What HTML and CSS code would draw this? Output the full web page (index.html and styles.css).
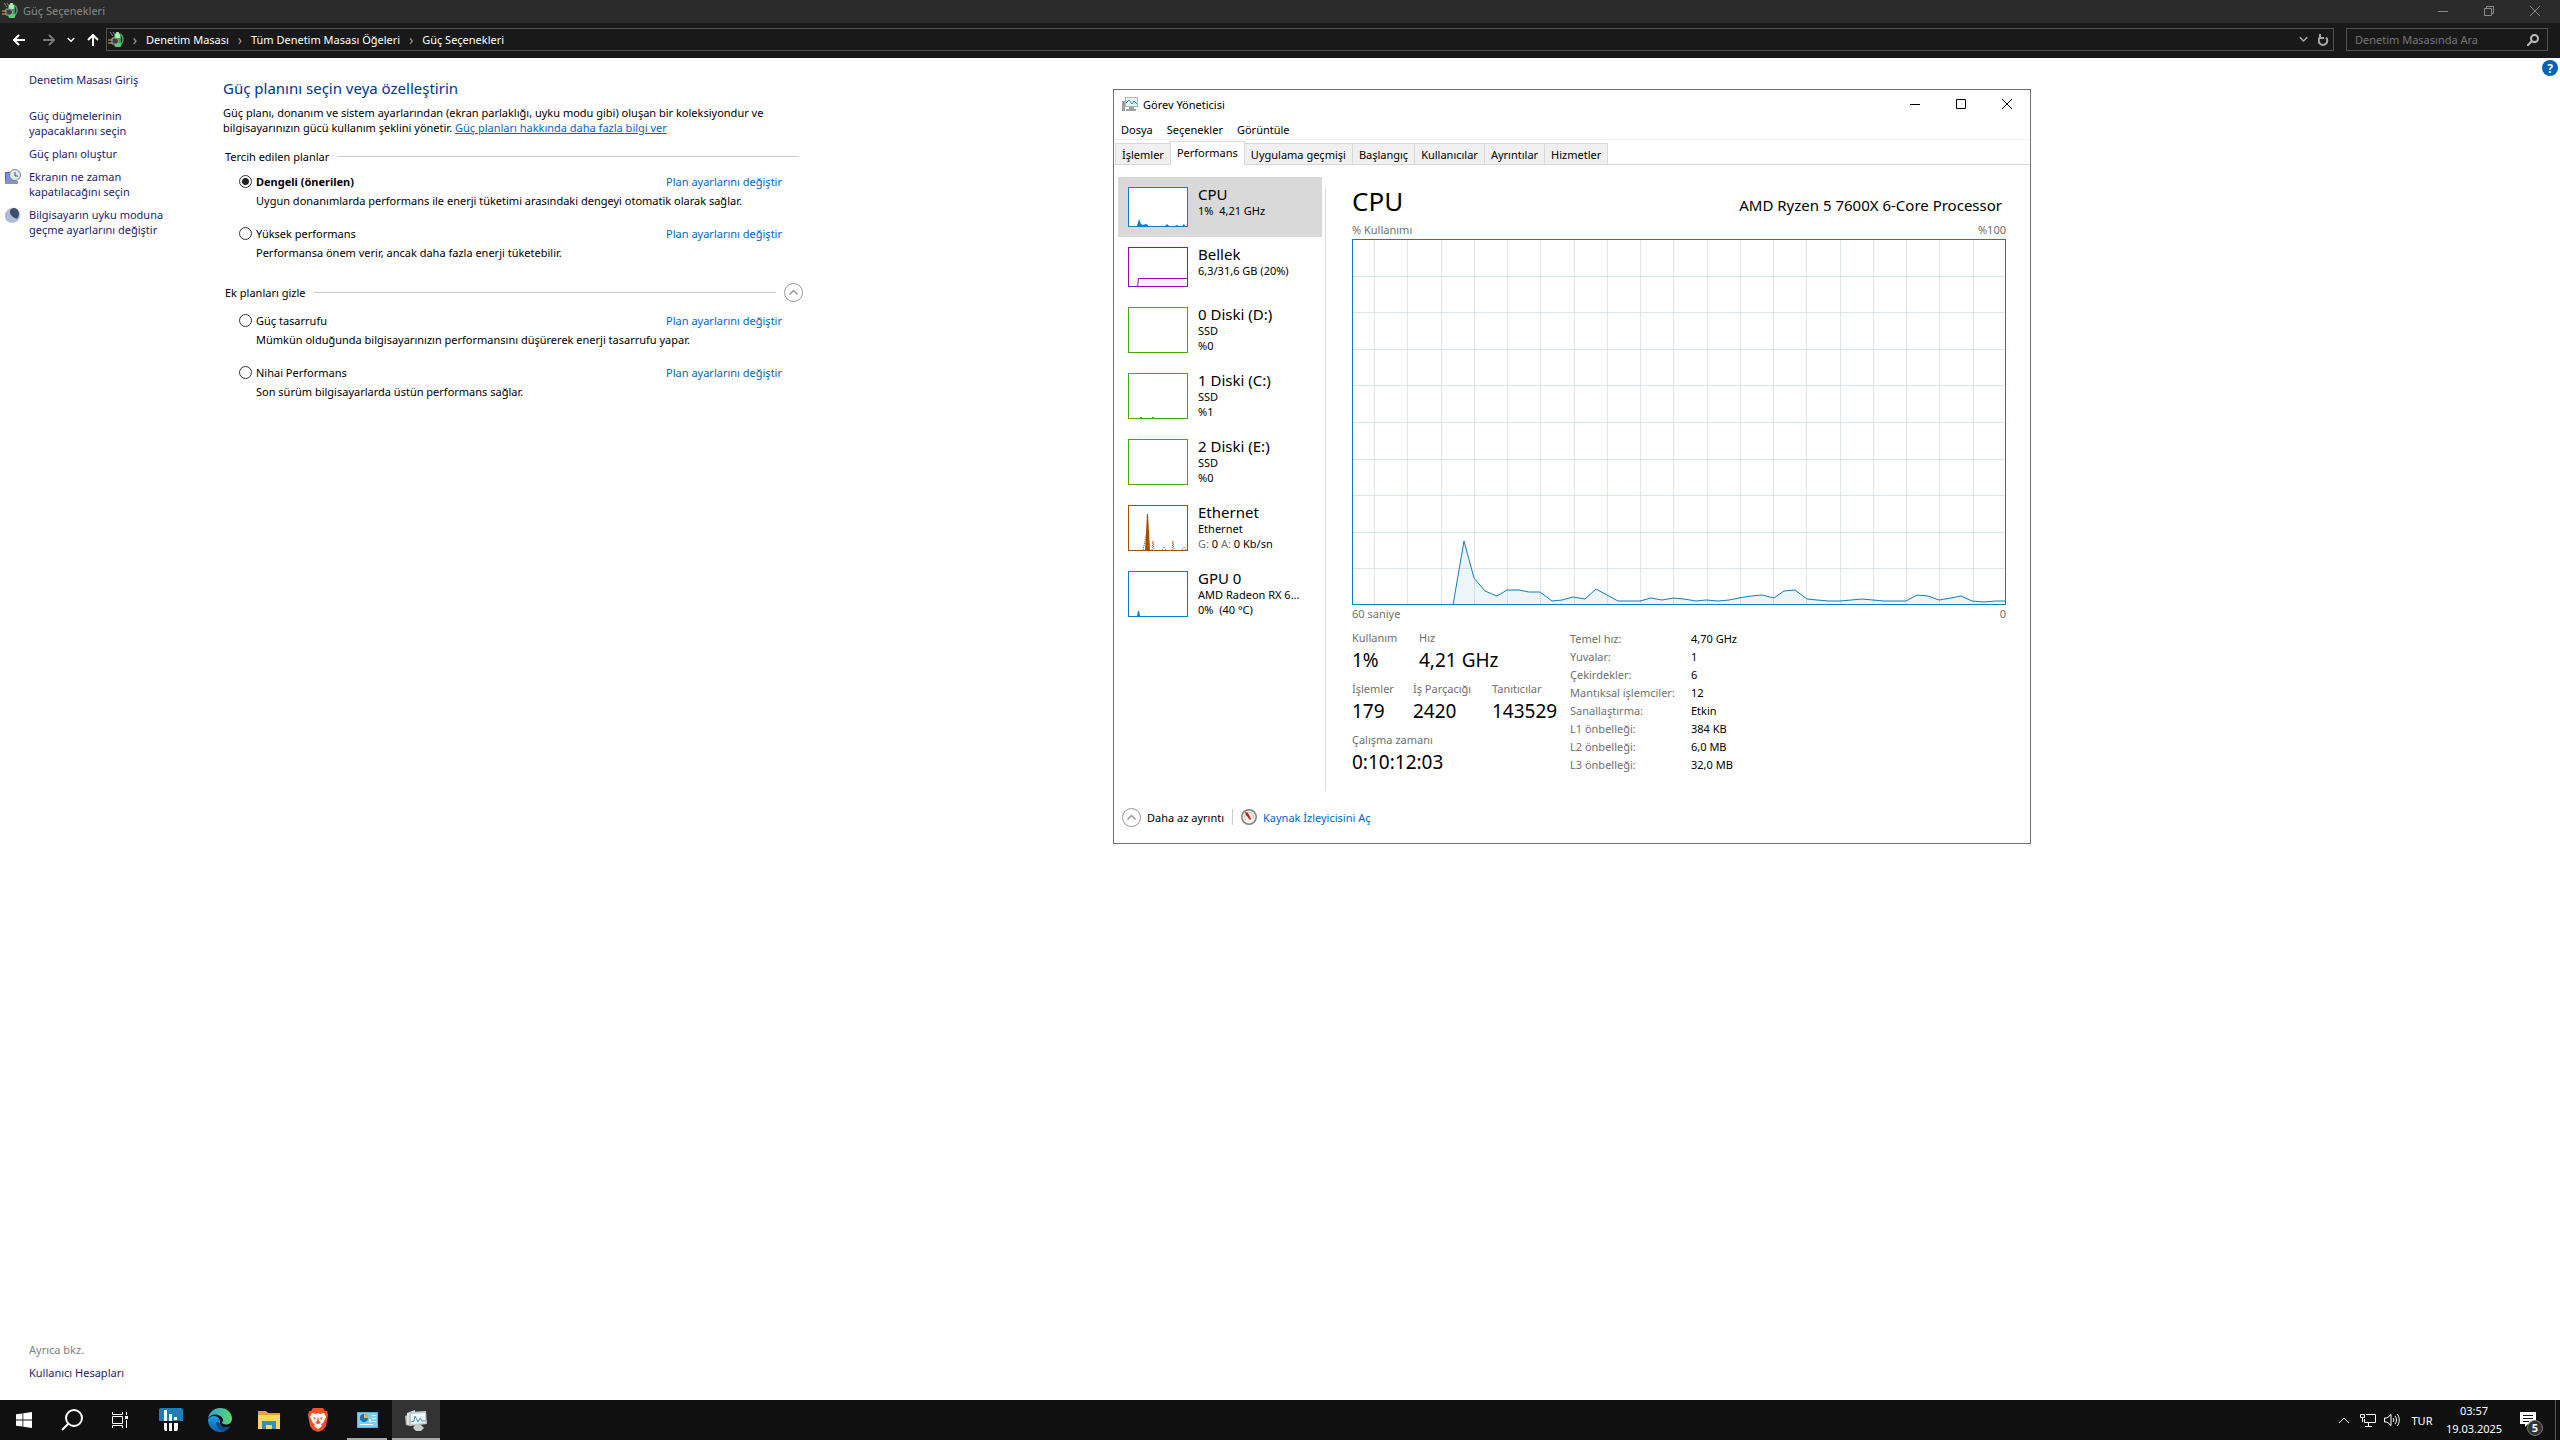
FILE: index.html
```html
<!DOCTYPE html>
<html lang="tr">
<head>
    <meta charset="UTF-8">
    <meta name="viewport" content="width=device-width, initial-scale=1.0">
    <title>Güç Seçenekleri</title>
    <link rel="stylesheet" href="styles.css">
</head>
<body>
    <!-- shared icons -->
    <svg class="defs" width="0" height="0" aria-hidden="true">
        <symbol id="power" viewBox="0 0 16 16">
            <path d="M2 0l3 4M5 0l2 3" stroke="#8a8a8a" stroke-width="1"/>
            <path d="M12 2c4 2 4 8 0 11" fill="none" stroke="#6f7d72" stroke-width="1.500"/>
            <rect x="6" y="1" width="7" height="14" rx="2" fill="#2f9e44"/>
            <rect x="8" y="0" width="3" height="2" rx="1" fill="#d5e8d8"/>
            <rect x="7" y="2" width="5" height="4" fill="#a5edb1"/>
            <rect x="7" y="11" width="6" height="4" rx="1" fill="#56cf6c"/>
            <path d="M4 6h5l2 3-2 3H4z" fill="#3a3f3c" stroke="#a9a9a9" stroke-width="1"/>
            <path d="M0 8h4M0 11h4" stroke="#e0b23c" stroke-width="1"/>
        </symbol>
        <symbol id="close" viewBox="0 0 10 10">
            <path d="M0 0l10 10M10 0L0 10" fill="none" stroke="currentColor"/>
        </symbol>
        <symbol id="minimize" viewBox="0 0 10 10">
            <path d="M0 5.500h10" stroke="currentColor"/>
        </symbol>
        <symbol id="chevron-up" viewBox="0 0 19 19">
            <circle cx="9.5" cy="9.5" r="9" fill="#fff" stroke="#999"/>
            <path d="M5.500 11.500l4-4 4 4" fill="none" stroke="#999" stroke-width="1.500"/>
        </symbol>
    </svg>

    <header>
        <div class="titlebar">
            <svg class="icon16"><use href="#power"/></svg>
            <span class="title">Güç Seçenekleri</span>
            <button class="win-btn" aria-label="Simge durumuna küçült"><svg><use href="#minimize"/></svg></button>
            <button class="win-btn" aria-label="Önceki boyut"><svg viewBox="0 0 10 10" fill="none" stroke="currentColor"><path d="M.5 2.500h7v7h-7zM2.500 2.500v-2h7v7h-2"/></svg></button>
            <button class="win-btn" aria-label="Kapat"><svg><use href="#close"/></svg></button>
        </div>
        <div class="navbar">
            <div class="nav-arrows">
                <button class="back" aria-label="Geri"><svg viewBox="0 0 12 12"><path d="M6 1L1 6l5 5M1 6h11"/></svg></button>
                <button class="dim" aria-label="İleri"><svg viewBox="0 0 12 12"><path d="M6 1l5 5-5 5M11 6H0"/></svg></button>
                <button class="small" aria-label="Son konumlar"><svg viewBox="0 0 12 12"><path d="M1 3l5 5 5-5"/></svg></button>
                <button aria-label="Yukarı"><svg viewBox="0 0 12 12"><path d="M1 6l5-5 5 5M6 1v11"/></svg></button>
            </div>
            <div class="address">
                <svg class="icon16"><use href="#power"/></svg>
                <span class="sep">›</span><a href="#">Denetim Masası</a>
                <span class="sep">›</span><a href="#">Tüm Denetim Masası Öğeleri</a>
                <span class="sep">›</span><a href="#">Güç Seçenekleri</a>
                <div class="address-btns">
                    <button aria-label="Önceki konumlar"><svg width="9" height="9" viewBox="0 0 12 12"><path d="M1 3l5 5 5-5"/></svg></button>
                    <button aria-label="Yenile"><svg width="11" height="12" viewBox="0 0 11 12"><path d="M2 3.500a4.300 4.300 0 1 0 6 0M2 0v4h4"/></svg></button>
                </div>
            </div>
            <form class="search">
                <input type="text" placeholder="Denetim Masasında Ara" aria-label="Denetim Masasında Ara">
                <svg width="12" height="12" viewBox="0 0 12 12"><circle cx="7.500" cy="4.500" r="3.500"/><path d="M5 7L0 12"/></svg>
            </form>
        </div>
    </header>

    <div class="panel">
        <nav class="sidebar">
            <a class="home" href="#">Denetim Masası Giriş</a>
            <a href="#">Güç düğmelerinin yapacaklarını seçin</a>
            <a href="#">Güç planı oluştur</a>
            <a href="#">
                <svg class="icon16" viewBox="0 0 16 16">
                    <path d="M0 3h8v12H0z" fill="#5261b8"/><path d="M1 4h10v8H1z" fill="#7d90dd"/>
                    <path d="M0 12h13v3H0z" fill="#8a93b8"/>
                    <circle cx="10" cy="6" r="5.500" fill="#dfe9ec" stroke="#78868c"/>
                    <path d="M10 3v4h3" fill="none" stroke="#3b5560"/>
                </svg>
                Ekranın ne zaman kapatılacağını seçin
            </a>
            <a href="#">
                <svg class="icon16" viewBox="0 0 16 16">
                    <circle cx="8" cy="8" r="7.500" fill="#c3cfdf"/>
                    <ellipse cx="9" cy="7" rx="5" ry="6" fill="#3f4d68"/>
                    <path d="M5 2c-1 5 2 9 8 10a7 7 0 1 1-8-10z" fill="#a9bdd8"/>
                </svg>
                Bilgisayarın uyku moduna geçme ayarlarını değiştir
            </a>
            <div class="see-also">
                <p>Ayrıca bkz.</p>
                <a href="#">Kullanıcı Hesapları</a>
            </div>
        </nav>

        <main>
            <h1>Güç planını seçin veya özelleştirin</h1>
            <p class="intro">Güç planı, donanım ve sistem ayarlarından (ekran parlaklığı, uyku modu gibi) oluşan bir koleksiyondur ve bilgisayarınızın gücü kullanım şeklini yönetir. <a href="#">Güç planları hakkında daha fazla bilgi ver</a></p>

            <section>
                <h2>Tercih edilen planlar</h2>
                <div class="plan">
                    <input type="radio" name="plan" id="balanced" checked>
                    <label for="balanced">Dengeli (önerilen)</label>
                    <a href="#">Plan ayarlarını değiştir</a>
                    <p>Uygun donanımlarda performans ile enerji tüketimi arasındaki dengeyi otomatik olarak sağlar.</p>
                </div>
                <div class="plan">
                    <input type="radio" name="plan" id="high">
                    <label for="high">Yüksek performans</label>
                    <a href="#">Plan ayarlarını değiştir</a>
                    <p>Performansa önem verir, ancak daha fazla enerji tüketebilir.</p>
                </div>
            </section>

            <section class="extra">
                <h2>Ek planları gizle <button aria-label="Ek planları gizle"><svg width="19" height="19"><use href="#chevron-up"/></svg></button></h2>
                <div class="plan">
                    <input type="radio" name="plan" id="saver">
                    <label for="saver">Güç tasarrufu</label>
                    <a href="#">Plan ayarlarını değiştir</a>
                    <p>Mümkün olduğunda bilgisayarınızın performansını düşürerek enerji tasarrufu yapar.</p>
                </div>
                <div class="plan">
                    <input type="radio" name="plan" id="ultimate">
                    <label for="ultimate">Nihai Performans</label>
                    <a href="#">Plan ayarlarını değiştir</a>
                    <p>Son sürüm bilgisayarlarda üstün performans sağlar.</p>
                </div>
            </section>
        </main>
        <button class="help" aria-label="Yardım">?</button>
    </div>

    <!-- Task Manager window -->
    <div class="taskmgr">
        <div class="tm-title">
            <svg class="icon16" viewBox="0 0 16 16">
                <path d="M0 5h3v10H0z" fill="#9aa0a3"/><path d="M1 6h1v2H1z" fill="#5fc16a"/>
                <path d="M3 1h13v10H3z" fill="#aeb6ba"/><path d="M4 2h11v8H4z" fill="#e3f4fb"/>
                <path d="M4 7l3-3 3 4 2-3 3 3" fill="none" stroke="#2d93c4"/>
                <path d="M7 11h5v2h2v2H4v-2h3z" fill="#9aa0a3"/>
            </svg>
            <span class="title">Görev Yöneticisi</span>
            <button class="win-btn" aria-label="Simge durumuna küçült"><svg><use href="#minimize"/></svg></button>
            <button class="win-btn" aria-label="Ekranı kapla"><svg viewBox="0 0 10 10"><path d="M.5.5h9v9h-9z" fill="none" stroke="currentColor"/></svg></button>
            <button class="win-btn" aria-label="Kapat"><svg><use href="#close"/></svg></button>
        </div>
        <div class="tm-menu">
            <button>Dosya</button>
            <button>Seçenekler</button>
            <button>Görüntüle</button>
        </div>
        <div class="tm-tabs">
            <button>İşlemler</button>
            <button class="active">Performans</button>
            <button>Uygulama geçmişi</button>
            <button>Başlangıç</button>
            <button>Kullanıcılar</button>
            <button>Ayrıntılar</button>
            <button>Hizmetler</button>
        </div>

        <div class="tm-body">
            <div class="tm-list">
                <button class="tm-item active">
                    <svg class="thumb cpu" viewBox="0 0 58 38"><path class="area" d="M8 38l2-7 2 5 2 1 3-1 2 1v1zM36 38l2-2 2 2zM46 38l2-1 2 1zM53 38l2-2 1 2z"/></svg>
                    <span><b>CPU</b><i>1%&nbsp; 4,21 GHz</i></span>
                </button>
                <button class="tm-item">
                    <svg class="thumb memory" viewBox="0 0 58 38"><path class="area" d="M8.500 38.500l1-7.500v-.5h49v8z"/></svg>
                    <span><b>Bellek</b><i>6,3/31,6 GB (20%)</i></span>
                </button>
                <button class="tm-item">
                    <svg class="thumb tall disk" viewBox="0 0 58 44"></svg>
                    <span><b>0 Diski (D:)</b><i>SSD</i><i>%0</i></span>
                </button>
                <button class="tm-item">
                    <svg class="thumb tall disk" viewBox="0 0 58 44"><path class="area" d="M11 43h2v1h-2zM23 43h2v1h-2z"/></svg>
                    <span><b>1 Diski (C:)</b><i>SSD</i><i>%1</i></span>
                </button>
                <button class="tm-item">
                    <svg class="thumb tall disk" viewBox="0 0 58 44"></svg>
                    <span><b>2 Diski (E:)</b><i>SSD</i><i>%0</i></span>
                </button>
                <button class="tm-item">
                    <svg class="thumb tall net" viewBox="0 0 58 44">
                        <path class="area" d="M16 44l2-36h1l2 36z"/>
                        <path class="dashed" d="M14 44l3-14M23 44l1-9 1 9M33 44l2-3 2 3M43 44l1-9 1 9M53 44l2-3 2 3"/>
                    </svg>
                    <span><b>Ethernet</b><i>Ethernet</i><i><em>G:</em> 0 <em>A:</em> 0 Kb/sn</i></span>
                </button>
                <button class="tm-item">
                    <svg class="thumb tall cpu" viewBox="0 0 58 44"><path class="area" d="M8 44l1-5h1l1 5z"/></svg>
                    <span><b>GPU 0</b><i>AMD Radeon RX 6...</i><i>0%&nbsp; (40 °C)</i></span>
                </button>
            </div>

            <div class="tm-detail">
                <div class="detail-head">
                    <h2>CPU</h2>
                    <span>AMD Ryzen 5 7600X 6-Core Processor</span>
                </div>
                <div class="axis"><span>% Kullanımı</span><span>%100</span></div>
                <svg class="chart" viewBox="0 0 654 366" preserveAspectRatio="none">
                    <g id="grid"></g>
                    <path class="line" d="M101 366L112 302L122 339L133 352L145 357L155 351L167 351L177 353L188 353L200 362L210 361L221 358L233 360L244 350L255 356L266 362L288 362L299 359L310 361L321 359L332 360L344 362L354 361L366 362L377 361L387 359L399 357L410 356L422 359L432 352L443 351L455 360L465 361L477 362L488 362L499 361L510 360L521 361L532 362L554 362L565 356L576 357L587 361L599 359L609 357L620 362L632 363L643 362L654 362V366z"/>
                    <rect class="frame" x="0.5" y="0.5" width="653" height="365"/>
                </svg>
                <div class="axis bottom"><span>60 saniye</span><span>0</span></div>

                <div class="stats">
                    <div class="counters">
                        <dl class="row1">
                            <div><dt>Kullanım</dt><dd>1%</dd></div>
                            <div><dt>Hız</dt><dd>4,21 GHz</dd></div>
                        </dl>
                        <dl class="row2">
                            <div><dt>İşlemler</dt><dd>179</dd></div>
                            <div><dt>İş Parçacığı</dt><dd>2420</dd></div>
                            <div><dt>Tanıtıcılar</dt><dd>143529</dd></div>
                        </dl>
                        <dl>
                            <div><dt>Çalışma zamanı</dt><dd>0:10:12:03</dd></div>
                        </dl>
                    </div>
                    <table class="specs">
                        <tr><th scope="row">Temel hız:</th><td>4,70 GHz</td></tr>
                        <tr><th scope="row">Yuvalar:</th><td>1</td></tr>
                        <tr><th scope="row">Çekirdekler:</th><td>6</td></tr>
                        <tr><th scope="row">Mantıksal işlemciler:</th><td>12</td></tr>
                        <tr><th scope="row">Sanallaştırma:</th><td>Etkin</td></tr>
                        <tr><th scope="row">L1 önbelleği:</th><td>384 KB</td></tr>
                        <tr><th scope="row">L2 önbelleği:</th><td>6,0 MB</td></tr>
                        <tr><th scope="row">L3 önbelleği:</th><td>32,0 MB</td></tr>
                    </table>
                </div>
            </div>
        </div>

        <div class="tm-footer">
            <button><svg width="19" height="19"><use href="#chevron-up"/></svg>Daha az ayrıntı</button>
            <a href="#">
                <svg class="icon16" viewBox="0 0 16 16">
                    <circle cx="8" cy="8" r="7.250" fill="#f4f1ec" stroke="#857f7a" stroke-width="1.500"/>
                    <path d="M5 11a4.500 4.500 0 1 1 7-1" fill="none" stroke="#c9c3bd"/>
                    <path d="M4 3l3 1 3 6-1 1-4-5z" fill="#c4161c"/>
                </svg>
                Kaynak İzleyicisini Aç
            </a>
        </div>
    </div>

    <footer class="taskbar">
        <button aria-label="Başlat"><svg width="16" height="16" viewBox="0 0 16 16" fill="#fff"><path d="M0 2.300L6.500 1.400V7.600H0zM7.300 1.300L16 0v7.600H7.300zM0 8.400h6.500v6.200L0 13.700zM7.300 8.400H16V16l-8.700-1.300z"/></svg></button>
        <button aria-label="Ara"><svg width="22" height="22" viewBox="0 0 22 22" fill="none" stroke="#fff" stroke-width="2"><circle cx="13" cy="9" r="8"/><path d="M7.500 14.500L1 21"/></svg></button>
        <button aria-label="Görev görünümü"><svg width="16" height="16" viewBox="0 0 16 16" fill="none" stroke="#fff"><path d="M.5 0v2.500h10V0M.5 16v-2.500h10V16M.5 4.500h10v7H.5zM14.500 0v3M14.500 8v8"/><path d="M13 4h3v3h-3z" fill="#fff" stroke="none"/></svg></button>
        <div class="apps">
            <button aria-label="HWiNFO"><svg width="24" height="24" viewBox="0 0 24 24"><path d="M2 0h20a2 2 0 0 1 2 2v11H0V2a2 2 0 0 1 2-2z" fill="#1c7fb8"/><path d="M5 2h3v11H5zM10 6h3v7h-3zM15 9h3v3h-3z" fill="#fff"/><path d="M5 15h3v8H6l-1-2zM10 15h3v8h-3zM15 15h4v6l-1 2h-3z" fill="#fff"/></svg></button>
            <button aria-label="Microsoft Edge">
                <svg width="24" height="24" viewBox="0 0 24 24">
                    <defs>
                        <linearGradient id="edgeTop" x1="0" x2="1"><stop offset="0" stop-color="#2aa6e0"/><stop offset="1" stop-color="#5cd768"/></linearGradient>
                        <linearGradient id="edgeBase" x1="0" x2="0" y1="0" y2="1"><stop offset="0" stop-color="#1b9de2"/><stop offset="1" stop-color="#0d5fae"/></linearGradient>
                    </defs>
                    <path d="M0 12a12 12 0 0 0 12 12c4 0 8-2 10-5.500-4 2-10 1-10-4.500 0-4-3-6-6-6-4 0-6 3-6 4z" fill="url(#edgeBase)"/>
                    <path d="M8 14c0 6 5 10 10 8 2-1 3-2 4-3.500-4 2-10 1-11-4.500z" fill="#114a8b"/>
                    <path d="M0 11C1 4 6 0 12 0c7 0 12 5 12 10.500 0 4-3 6-6 6-2.500 0-4-1-4-1.700 0-.6 1-1.300 1-2.800C15 9 11 6.500 7 6.500 3 6.500 1 9 0 11z" fill="url(#edgeTop)"/>
                </svg>
            </button>
            <button aria-label="Dosya Gezgini"><svg width="22" height="20" viewBox="0 0 22 20"><path d="M0 1h8l2 2h12v3H0z" fill="#e0a52c"/><path d="M0 5h22v14H0z" fill="#fbd566"/><path d="M4 11h14v8h-4v-4H8v4H4z" fill="#3a8cc9"/></svg></button>
            <button aria-label="Brave"><svg width="20" height="24" viewBox="0 0 20 24"><path d="M5 0h10l2 3 2 0 1 4-2 11-3 4-5 2-5-2-3-4L0 7l1-4h2z" fill="#f4502a"/><path d="M4 5l4 1 2-1 2 1 4-1 2 4-3 6-2 1 1 2-4 3-4-3 1-2-2-1-3-6z" fill="#fff"/><path d="M5 9l3 1-1 2zM15 9l-3 1 1 2zM10 8l1 5 2 2-3 1-3-1 2-2z" fill="#f4502a"/></svg></button>
            <button class="open" aria-label="Denetim Masası"><svg width="21" height="16" viewBox="0 0 21 16"><path d="M0 0h21v16H0z" fill="#55b4e4"/><path d="M1 1h19v14H1z" fill="#7fcdf1"/><circle cx="7" cy="6" r="4" fill="#1673b8"/><path d="M7 6V2a4 4 0 0 1 4 4z" fill="#f3b33d"/><path d="M12 7h2v3h-2zM15 3h4v1h-4zM15 6h4v1h-4zM15 9h4v1h-4zM3 12h13v1H3z" fill="#fff"/></svg></button>
            <button class="open current" aria-label="Görev Yöneticisi"><svg width="22" height="21" viewBox="0 0 22 21"><path d="M0 6l5-2v12l-4-1z" fill="#b7bcbf"/><path d="M2 3l8-3v3l-6 2v10l-2-1z" fill="#e1e4e6"/><path d="M4 2l17-1 1 13-17 2z" fill="#c5cacd"/><path d="M6 4l14-1v10L6 14z" fill="#effafe"/><path d="M6 12l3-1 1-5 3 6 2-4 2 3h3" fill="none" stroke="#3b93bb"/><path d="M10 15h6l3 3-3 3h-5l-3-3z" fill="#c8ced0"/></svg></button>
        </div>
        <div class="tray">
            <button aria-label="Gizli simgeler"><svg width="12" height="12" viewBox="0 0 12 12"><path d="M1 9l5-5 5 5"/></svg></button>
            <button aria-label="Ağ"><svg width="16" height="14" viewBox="0 0 16 14"><path d="M6 1.500h9.500v8H4.500V6M8.500 10v3M5 13.500h7M.5 1.500h4v3h-4zM2.500 5v4"/></svg></button>
            <button aria-label="Ses"><svg width="16" height="14" viewBox="0 0 16 14"><path d="M.5 5v4H3l4 3.500v-11L3 5zM9 5c1 1 1 3 0 4M11 3c2 2 2 6 0 8M13 1c3 3 3 9 0 12"/></svg></button>
            <button class="lang">TUR</button>
            <button class="clock"><span>03:57</span><span>19.03.2025</span></button>
            <button class="notify" aria-label="Bildirimler"><svg width="16" height="16" viewBox="0 0 16 16"><path d="M0 0h16v12h-8l-3 3v-3H0z" fill="#fff" stroke="none"/><path d="M3 3.500h10M3 6.500h10M3 9.500h6" stroke="#101010"/></svg><span class="badge">5</span></button>
            <button class="show-desktop" aria-label="Masaüstünü göster"></button>
        </div>
    </footer>

    <script>
        const grid = document.getElementById('grid');
        let d = '';
        for (let x = 22; x < 650; x += 33.25) {
            d += `M${Math.round(x) + 0.5} 0V366`;
        }
        for (let i = 1; i < 10; i++) {
            d += `M0 ${Math.round(i * 36.6) + 0.5}H654`;
        }
        grid.innerHTML = `<path class="grid-line" d="${d}"/>`;
    </script>
</body>
</html>
```
FILE: styles.css
```css
* {
    margin: 0;
    padding: 0;
    box-sizing: border-box;
}
body {
    font-family: "Noto Sans", "Open Sans", sans-serif;
    font-size: 11px;
    line-height: 15px;
    color: #000;
    background: #fff;
    height: 100vh;
    display: flex;
    flex-direction: column;
    position: relative;
    overflow: hidden;
}
button {
    font: inherit;
    color: inherit;
    background: none;
    border: none;
}
a {
    color: #0066cc;
    text-decoration: none;
}
.defs {
    position: absolute;
}
.icon16 {
    width: 16px;
    height: 16px;
    flex: none;
}
.title {
    flex: 1;
}

/* window header */
.titlebar {
    display: flex;
    align-items: center;
    height: 23px;
    padding-left: 2px;
    padding-bottom: 2px;
    gap: 5px;
    background: #2b2b2b;
    color: #8a8a8a;
}
.win-btn {
    width: 41px;
    height: 20px;
    display: flex;
    align-items: center;
    justify-content: center;
}
.win-btn svg {
    width: 10px;
    height: 10px;
}
.titlebar .win-btn:last-child {
    margin-right: 5px;
}
.navbar {
    display: flex;
    align-items: center;
    height: 35px;
    padding: 0 12px 2px 13px;
    background: #191919;
    color: #fff;
}
.navbar svg:not(.icon16) {
    fill: none;
    stroke: currentColor;
    stroke-width: 2;
}
.nav-arrows {
    display: flex;
    align-items: center;
    gap: 12px;
    padding-right: 7px;
}
.nav-arrows button {
    width: 12px;
    height: 12px;
}
.nav-arrows button svg {
    display: block;
    width: 12px;
    height: 12px;
}
.nav-arrows .back {
    margin-right: 6px;
}
.nav-arrows .dim {
    color: #777;
}
.nav-arrows .small,
.nav-arrows .small svg {
    width: 8px;
    height: 8px;
}
.address {
    flex: 1;
    display: flex;
    align-items: center;
    height: 23px;
    border: 1px solid #535353;
    padding: 0 4px 0 1px;
}
.address a {
    color: #fff;
}
.address .sep {
    color: #a0a0a0;
    width: 22px;
    text-align: center;
    font-size: 14px;
}
.address-btns {
    display: flex;
    gap: 10px;
    margin-left: auto;
    color: #aaa;
}
.address-btns button {
    display: flex;
    align-items: center;
}
.search {
    display: flex;
    align-items: center;
    width: 202px;
    height: 23px;
    margin-left: 12px;
    padding: 0 8px;
    border: 1px solid #535353;
    color: #bbb;
}
.search input {
    flex: 1;
    min-width: 0;
    font: inherit;
    color: #fff;
    background: none;
    border: none;
    outline: none;
}
.search input::placeholder {
    color: #767676;
}

/* control panel page */
.panel {
    flex: 1;
    display: flex;
    align-items: stretch;
}
.sidebar {
    width: 223px;
    padding: 14px 44px 20px 29px;
    display: flex;
    flex-direction: column;
    gap: 8px;
}
.sidebar a {
    color: #1c1c70;
    position: relative;
}
.sidebar .home {
    margin-bottom: 13px;
}
.sidebar a svg {
    position: absolute;
    left: -24px;
    top: 0;
}
.see-also {
    margin-top: auto;
}
.see-also p {
    color: #808080;
    margin-bottom: 8px;
}
main {
    width: 100%;
    max-width: 576px;
    padding-top: 18px;
}
h1 {
    font-size: 15px;
    font-weight: normal;
    line-height: 24px;
    color: #003399;
    margin-bottom: 5px;
}
.intro {
    margin-bottom: 11px;
}
.intro a {
    text-decoration: underline;
}
main h2 {
    display: flex;
    align-items: center;
    gap: 8px;
    height: 20px;
    padding-left: 2px;
    margin-bottom: 8px;
    font-size: 11px;
    font-weight: normal;
}
main h2::after {
    content: "";
    flex: 1;
    height: 1px;
    background: #ccc;
}
main h2 button {
    order: 1;
    height: 19px;
    margin-right: -4px;
}
main h2 svg {
    display: block;
}
.extra h2 {
    margin-top: 22px;
    margin-bottom: 11px;
}
.plan {
    display: grid;
    grid-template-columns: 13px 1fr auto;
    column-gap: 4px;
    row-gap: 4px;
    align-items: center;
    padding-left: 16px;
    padding-right: 17px;
}
.plan + .plan {
    margin-top: 18px;
}
.plan p {
    grid-column: 2 / 4;
}
.plan input {
    appearance: none;
    width: 13px;
    height: 13px;
    border: 1px solid #333;
    border-radius: 50%;
}
.plan input:checked {
    background: radial-gradient(circle, #222 3px, #fff 4px);
}
.plan input:checked + label {
    font-weight: bold;
}
.help {
    width: 16px;
    height: 16px;
    margin: 2px 2px 0 auto;
    border-radius: 50%;
    background: #0063b8;
    color: #fff;
    font-size: 12px;
    font-weight: bold;
}

/* task manager */
.taskmgr {
    position: absolute;
    left: 1113px;
    top: 89px;
    width: 918px;
    background: #fff;
    border: 1px solid #707070;
}
.tm-title {
    display: flex;
    align-items: center;
    height: 30px;
    padding-left: 8px;
    padding-bottom: 2px;
    gap: 5px;
}
.tm-title .win-btn:last-child {
    margin-right: 3px;
}
.tm-menu {
    display: flex;
    gap: 14px;
    height: 20px;
    padding-left: 7px;
    border-bottom: 1px solid #f0f0f0;
}
.tm-tabs {
    display: flex;
    align-items: flex-end;
    height: 25px;
    padding-left: 1px;
    border-bottom: 1px solid #d9d9d9;
}
.tm-tabs button {
    height: 21px;
    padding: 0 6px;
    background: #f0f0f0;
    border: 1px solid #d9d9d9;
    border-bottom: none;
    margin-right: -1px;
}
.tm-tabs .active {
    height: 24px;
    padding-bottom: 2px;
    margin-bottom: -1px;
    background: #fff;
}
.tm-body {
    display: flex;
    padding-top: 12px;
}
.tm-list {
    width: 211px;
    padding: 0 3px 0 4px;
}
.tm-item {
    display: flex;
    width: 100%;
    padding: 10px;
    gap: 10px;
    text-align: left;
}
.tm-item.active {
    background: #d9d9d9;
}
.tm-item b,
.tm-item i {
    display: block;
    font-style: normal;
    font-weight: normal;
    white-space: nowrap;
}
.tm-item span {
    height: 40px;
}
.tm-item b {
    font-size: 15px;
    line-height: 14px;
    margin-bottom: 2px;
}
.tm-item em {
    font-style: normal;
    color: #707070;
}
.thumb {
    width: 60px;
    height: 40px;
    flex: none;
    background: #fff;
    border: 1px solid;
}
.thumb.tall {
    height: 46px;
}
.thumb .area {
    fill: currentColor;
}
.cpu {
    color: #117dbb;
}
.memory {
    color: #8b12ae;
}
.memory .area {
    fill: #f4f2f4;
    stroke: currentColor;
}
.disk {
    color: #4da60c;
}
.net {
    color: #a74f01;
}
.net .dashed {
    fill: none;
    stroke: currentColor;
    stroke-dasharray: 1 1;
}
.tm-detail {
    flex: 1;
    margin-top: 10px;
    padding: 0 24px 8px 26px;
    border-left: 1px solid #ddd;
}
.detail-head {
    display: flex;
    justify-content: space-between;
    align-items: baseline;
    height: 35px;
    padding-right: 4px;
    font-size: 15px;
}
.detail-head h2 {
    font-size: 26px;
    line-height: 28px;
    font-weight: normal;
}
.axis {
    display: flex;
    justify-content: space-between;
    color: #707070;
    margin-bottom: 2px;
}
.axis.bottom {
    margin: 1px 0 8px;
}
.chart {
    display: block;
    width: 100%;
    height: 366px;
}
.chart .grid-line {
    fill: none;
    stroke: #dde5ec;
}
.chart .line {
    fill: #117dbb;
    fill-opacity: 0.08;
    stroke: #117dbb;
}
.chart .frame {
    fill: none;
    stroke: #117dbb;
}
.stats {
    display: flex;
    align-items: flex-start;
}
.counters {
    width: 218px;
    padding-top: 1px;
}
.counters dl {
    display: grid;
    margin-bottom: 6px;
}
.counters .row1 {
    grid-template-columns: 67px auto;
}
.counters .row2 {
    grid-template-columns: 61px 79px auto;
}
.counters dt {
    color: #707070;
}
.counters dd {
    font-size: 19px;
    line-height: 30px;
}
.specs {
    border-collapse: collapse;
}
.specs th {
    width: 121px;
    text-align: left;
    font-weight: normal;
    color: #707070;
}
.specs td,
.specs th {
    height: 18px;
}
.tm-footer {
    display: flex;
    align-items: center;
    height: 52px;
    padding-left: 8px;
}
.tm-footer button,
.tm-footer a {
    display: flex;
    align-items: center;
    gap: 6px;
}
.tm-footer a {
    margin-left: 8px;
    padding-left: 8px;
    border-left: 1px solid #ccc;
}

/* taskbar */
.taskbar {
    display: flex;
    height: 40px;
    background: #101010;
    color: #fff;
}
.taskbar > button,
.apps button {
    display: flex;
    align-items: center;
    justify-content: center;
    width: 48px;
    height: 40px;
}
.apps {
    display: flex;
    gap: 1px;
    margin-left: 3px;
}
.apps .open {
    background: linear-gradient(#a8a8a8, #a8a8a8) center bottom / 40px 2px no-repeat;
}
.apps .current {
    background-size: 48px 2px;
    background-color: #333;
}
.tray {
    display: flex;
    align-items: center;
    margin-left: auto;
}
.tray button {
    display: flex;
    align-items: center;
    justify-content: center;
    width: 24px;
    height: 40px;
}
.tray svg {
    fill: none;
    stroke: #fff;
}
.tray .lang {
    width: 36px;
}
.tray .clock {
    width: 68px;
    flex-direction: column;
    line-height: 18px;
}
.tray .notify {
    position: relative;
    width: 38px;
    margin-left: 1px;
}
.badge {
    position: absolute;
    left: 18px;
    top: 20px;
    width: 16px;
    height: 16px;
    border: 1px solid #777;
    border-radius: 50%;
    background: #333;
    font-size: 11px;
    line-height: 14px;
    font-weight: bold;
}
.tray .show-desktop {
    width: 5px;
    margin-left: 8px;
    border-left: 1px solid #555;
}
```
